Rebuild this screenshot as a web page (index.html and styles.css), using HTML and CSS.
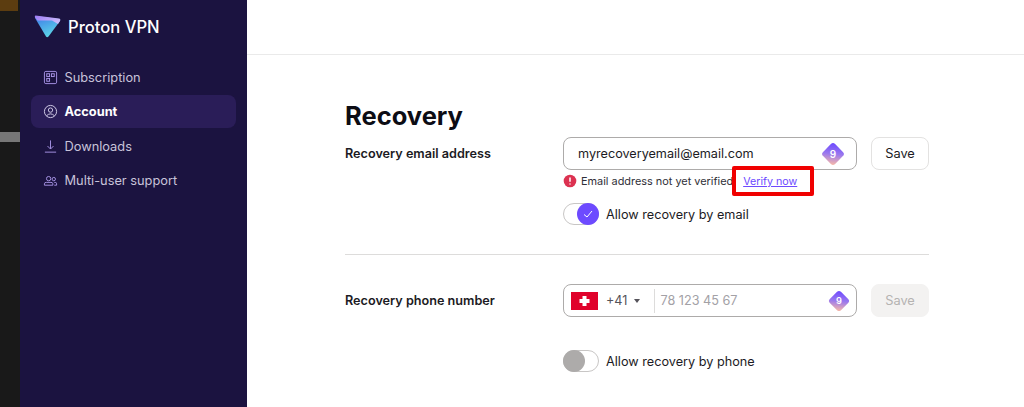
FILE: index.html
```html
<!DOCTYPE html>
<html lang="en">
<head>
    <meta charset="UTF-8">
    <title>Proton VPN - Recovery</title>
    <link rel="stylesheet" href="styles.css">
</head>
<body>
    <div class="strip">
        <div class="strip-top"></div>
        <div class="strip-bar"></div>
    </div>

    <nav class="sidebar">
        <div class="logo">
            <svg width="28" height="26" viewBox="0 0 28 26">
                <defs>
                    <linearGradient id="logoBlue" x1="0.2" y1="0" x2="0.7" y2="1">
                        <stop offset="0" stop-color="#3f7fe8"/>
                        <stop offset="1" stop-color="#5fdce8"/>
                    </linearGradient>
                    <linearGradient id="logoPurple" x1="0" y1="0" x2="1" y2="0.5">
                        <stop offset="0" stop-color="#9d7bf5"/>
                        <stop offset="1" stop-color="#c9b8fb"/>
                    </linearGradient>
                </defs>
                <path d="M1.500 2 L25 5 Q27 5.400 26 7 L14.500 22.500 Q13 24 12 22.500 L1 4 Q0.500 2 1.500 2 Z" fill="url(#logoBlue)"/>
                <path d="M1.500 1.500 L25 4.500 Q27 5 26 7 L24 10 L18 6.500 L3.500 6.500 L1 3.500 Q0.500 1.500 1.500 1.500 Z" fill="url(#logoPurple)"/>
            </svg>
            <span class="logo-text">Proton VPN</span>
        </div>
        <ul class="menu">
            <li class="menu-item">
                <svg class="menu-icon" width="15" height="15" viewBox="0 0 16 16" fill="none" stroke="#a995e8">
                    <rect x="1.500" y="1.500" width="13" height="13" rx="1.500"/>
                    <rect x="4" y="4" width="3" height="3"/>
                    <rect x="9" y="4" width="3" height="3"/>
                    <rect x="4" y="9" width="3" height="3"/>
                </svg>
                Subscription
            </li>
            <li class="menu-item active">
                <svg class="menu-icon" width="15" height="15" viewBox="0 0 16 16" fill="none" stroke="#d8d2ec">
                    <circle cx="8" cy="8" r="6.500"/>
                    <circle cx="8" cy="6.500" r="2.300"/>
                    <path d="M3.800 12.500 Q8 8.500 12.200 12.500"/>
                </svg>
                Account
            </li>
            <li class="menu-item">
                <svg class="menu-icon" width="15" height="15" viewBox="0 0 16 16" fill="none" stroke="#a995e8">
                    <path d="M8 1.500 V10.500 M4.800 7.500 L8 10.700 L11.200 7.500 M2 14 H14"/>
                </svg>
                Downloads
            </li>
            <li class="menu-item">
                <svg class="menu-icon" width="15" height="15" viewBox="0 0 16 16" fill="none" stroke="#a995e8">
                    <circle cx="6" cy="6" r="2.300"/>
                    <circle cx="11.500" cy="6.500" r="1.800"/>
                    <path d="M1.500 13 V11.500 Q1.500 10 3.500 10 H8.500 Q10.500 10 10.500 11.500 V13 Z M12 10 H13 Q14.500 10 14.500 11.500 V13 H12"/>
                </svg>
                Multi-user support
            </li>
        </ul>
    </nav>

    <main class="main">
        <header class="topbar"></header>
        <div class="content">
            <h1>Recovery</h1>

            <section class="row">
                <label class="row-label">Recovery email address</label>
                <div class="row-field">
                    <div class="input-line">
                        <div class="input email-input">
                            <span class="input-value">myrecoveryemail@email.com</span>
                            <svg class="badge" width="26" height="26" viewBox="0 0 26 26">
                                <use href="#badgeShape"/>
                                <text x="13" y="16.500" class="badge-num">9</text>
                            </svg>
                        </div>
                        <button class="btn">Save</button>
                    </div>
                    <div class="notice">
                        <svg width="14" height="14" viewBox="0 0 14 14">
                            <circle cx="7" cy="7" r="6.300" fill="#dc3251"/>
                            <path d="M7 3.500 V7.800 M7 9.500 V10.500" stroke="#fff" stroke-width="1.500"/>
                        </svg>
                        <span>Email address not yet verified</span>
                        <span class="verify-box"><a class="verify-link" href="#">Verify now</a></span>
                    </div>
                    <div class="toggle-line">
                        <span class="toggle on">
                            <span class="knob">
                                <svg width="12" height="12" viewBox="0 0 12 12" fill="none" stroke="#fff">
                                    <path d="M2 6.500 L5 9 L10 3"/>
                                </svg>
                            </span>
                        </span>
                        Allow recovery by email
                    </div>
                </div>
            </section>

            <hr class="divider">

            <section class="row">
                <label class="row-label">Recovery phone number</label>
                <div class="row-field">
                    <div class="input-line">
                        <div class="input phone-input">
                            <svg class="flag" width="27" height="18" viewBox="0 0 27 18">
                                <rect width="27" height="18" fill="#e0022b"/>
                                <path d="M11.500 4 H15.500 V7 H18.500 V11 H15.500 V14 H11.500 V11 H8.500 V7 H11.500 Z" fill="#fff"/>
                            </svg>
                            <span class="dial">+41</span>
                            <span class="caret"></span>
                            <span class="input-sep"></span>
                            <span class="placeholder">78 123 45 67</span>
                            <svg class="badge" width="24" height="24" viewBox="0 0 26 26">
                                <use href="#badgeShape"/>
                                <text x="13" y="16.500" class="badge-num">9</text>
                            </svg>
                        </div>
                        <button class="btn" disabled>Save</button>
                    </div>
                    <div class="toggle-line toggle-phone">
                        <span class="toggle"><span class="knob"></span></span>
                        Allow recovery by phone
                    </div>
                </div>
            </section>
        </div>
    </main>

    <svg class="defs" width="0" height="0">
        <defs>
            <linearGradient id="badgeGrad" x1="0.1" y1="0" x2="0.9" y2="1">
                <stop offset="0" stop-color="#6d4aff"/>
                <stop offset="0.5" stop-color="#9a78ee"/>
                <stop offset="1" stop-color="#f7b8a8"/>
            </linearGradient>
            <rect id="badgeShape" x="4.500" y="4.500" width="17" height="17" rx="3" fill="url(#badgeGrad)" transform="rotate(45 13 13)"/>
        </defs>
    </svg>
</body>
</html>
```

FILE: styles.css
```css
* {
    box-sizing: border-box;
}

html, body {
    height: 100%;
}

body {
    margin: 0;
    display: flex;
    overflow: hidden;
    font-family: Inter, "Noto Sans", sans-serif;
    background: #ffffff;
    color: #1c1b24;
}

.defs {
    position: absolute;
}

/* window behind the app */
.strip {
    width: 20px;
    flex-shrink: 0;
    background: #191919;
}

.strip-top {
    height: 11px;
    background: #5c3d10;
    margin-right: 2px;
}

.strip-bar {
    height: 10px;
    margin-top: 121px;
    background: #777777;
}

.sidebar {
    width: 227px;
    flex-shrink: 0;
    background: #1b1340;
    padding: 14px 11px 0;
}

.logo {
    display: flex;
    align-items: center;
    gap: 6px;
    padding-left: 3px;
    height: 26px;
}

.logo-text {
    color: #ffffff;
    font-size: 16.600px;
    font-weight: 500;
}

.menu {
    list-style: none;
    margin: 20px 0 0;
    padding: 0;
}

.menu-item {
    display: flex;
    align-items: center;
    gap: 6.500px;
    height: 33px;
    margin-bottom: 1.500px;
    padding: 1px 0 0 12px;
    border-radius: 8px;
    font-size: 12.800px;
    color: #c8c3da;
}

.menu-item.active {
    background: #2a1d58;
    color: #ffffff;
    font-weight: 700;
}

.main {
    flex: 1;
    min-width: 0;
}

.topbar {
    height: 55px;
    border-bottom: 1px solid #eaeaea;
}

.content {
    width: 584px;
    margin-left: 98px;
    padding-top: 44px;
}

h1 {
    margin: 0 0 4px;
    font-size: 25.500px;
    line-height: 34px;
    font-weight: 700;
    color: #0c0c14;
}

.row {
    display: flex;
}

.row-label {
    width: 218px;
    flex-shrink: 0;
    font-size: 12.650px;
    font-weight: 600;
    line-height: 33px;
}

.row-field {
    flex: 1;
}

.input-line {
    display: flex;
    gap: 14px;
}

.input {
    width: 294px;
    height: 33px;
    display: flex;
    align-items: center;
    border: 1px solid #adabaa;
    border-radius: 8px;
    font-size: 12.650px;
}

.email-input {
    padding: 0 0 0 14px;
}

.input-value {
    flex: 1;
    color: #1c1b24;
}

.badge {
    flex-shrink: 0;
}

.email-input .badge {
    margin-right: 10px;
}

.badge-num {
    font-size: 10px;
    font-weight: 600;
    fill: #ffffff;
    text-anchor: middle;
}

.btn {
    width: 58px;
    height: 33px;
    padding: 0;
    border: 1px solid #e3e2e1;
    border-radius: 8px;
    background: #ffffff;
    font-family: inherit;
    font-size: 12.800px;
    color: #1c1b24;
}

.btn:disabled {
    border-color: #f3f2f1;
    background: #f3f2f1;
    color: #b5b3b1;
}

.notice {
    display: flex;
    align-items: center;
    gap: 4px;
    height: 22px;
    font-size: 10.900px;
    color: #302f38;
}

.verify-box {
    display: inline-block;
    padding: 0 13px 0 7px;
    height: 30px;
    line-height: 22px;
    border: 4px solid #f00000;
    border-radius: 2px;
    margin-left: -5px;
}

.verify-link {
    color: #6d4aff;
    font-size: 10.700px;
}

.toggle-line {
    display: flex;
    align-items: center;
    gap: 7px;
    margin-top: 11px;
    font-size: 12.700px;
    color: #1c1b24;
}

.toggle-phone {
    margin-top: 33px;
}

.toggle {
    width: 36px;
    height: 22px;
    display: flex;
    align-items: center;
    border: 1px solid #c8c6c5;
    border-radius: 11px;
}

.toggle .knob {
    width: 22px;
    height: 22px;
    margin-left: -1px;
    border-radius: 50%;
    background: #adabaa;
    display: flex;
    align-items: center;
    justify-content: center;
}

.toggle.on {
    justify-content: flex-end;
}

.toggle.on .knob {
    background: #6d4aff;
    margin: 0 -1px 0 0;
}

.divider {
    margin: 29px 0 29px;
    border: 0;
    border-top: 1px solid #dddcdb;
}

.phone-input {
    padding-left: 7px;
}

.flag {
    flex-shrink: 0;
}

.dial {
    margin-left: 8px;
    color: #55535a;
}

.caret {
    margin-left: 7px;
    border: 3.500px solid transparent;
    border-top: 4px solid #55535a;
    border-bottom: 0;
}

.input-sep {
    width: 1px;
    height: 24px;
    margin: 0 5px 0 14px;
    background: #dddcdb;
}

.placeholder {
    flex: 1;
    color: #a3a1a6;
}

.phone-input .badge {
    margin-right: 5px;
}
```
